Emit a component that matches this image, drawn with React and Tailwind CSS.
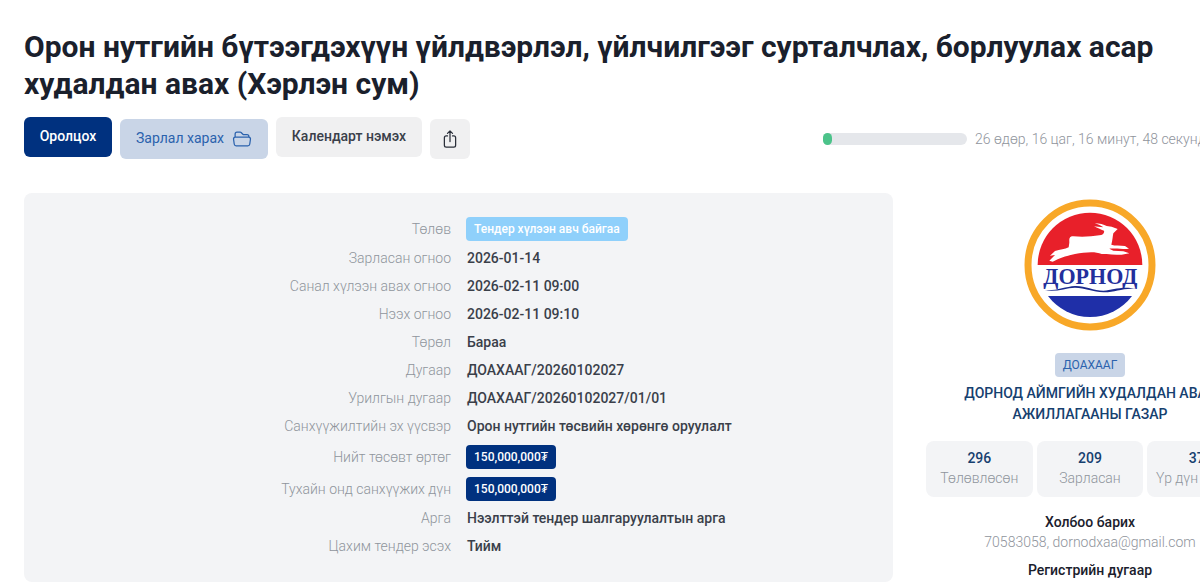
import React from 'react';
import { HiOutlineFolderOpen, HiOutlineArrowUpOnSquare } from 'react-icons/hi2';

const rows = [
  { label: 'Төлөв', status: 'Тендер хүлээн авч байгаа' },
  { label: 'Зарласан огноо', value: '2026-01-14' },
  { label: 'Санал хүлээн авах огноо', value: '2026-02-11 09:00' },
  { label: 'Нээх огноо', value: '2026-02-11 09:10' },
  { label: 'Төрөл', value: 'Бараа' },
  { label: 'Дугаар', value: 'ДОАХААГ/20260102027' },
  { label: 'Урилгын дугаар', value: 'ДОАХААГ/20260102027/01/01' },
  { label: 'Санхүүжилтийн эх үүсвэр', value: 'Орон нутгийн төсвийн хөрөнгө оруулалт' },
  { label: 'Нийт төсөвт өртөг', money: '150,000,000₮' },
  { label: 'Тухайн онд санхүүжих дүн', money: '150,000,000₮' },
  { label: 'Арга', value: 'Нээлттэй тендер шалгаруулалтын арга' },
  { label: 'Цахим тендер эсэх', value: 'Тийм' },
];

const stats = [
  { count: 296, label: 'Төлөвлөсөн' },
  { count: 209, label: 'Зарласан' },
  { count: 372, label: 'Үр дүн гарсан' },
];

const DornodLogo = () => (
  <svg viewBox="0 0 480 450" className="w-[160px] h-[150px]">
    <circle cx="240" cy="225" r="186" fill="#fff" stroke="#f8a828" strokeWidth="21" />
    <path d="M83 225 A157 157 0 0 1 397 225 Z" fill="#e8202a" />
    <path d="M114 318 L366 318 A157 157 0 0 1 114 318 Z" fill="#1f2fa8" />
    <path
      d="M323 117 L305 110 L290 108 C282 104 268 100 254 100 C268 104 274 108 280 112 C270 110 258 110 252 108 C262 114 272 118 282 122 C284 130 278 134 268 136 C245 140 215 142 190 139 C176 138 178 150 178 158 L176 172 C165 178 150 178 135 183 L120 197 L135 195 L118 212 L128 215 C145 207 165 198 195 192 C225 187 255 184 275 192 C295 194 315 194 335 194 L358 190 L340 184 L310 182 L298 176 C312 175 335 178 357 176 L345 168 C330 165 315 168 304 164 C308 150 308 138 310 130 Z"
      fill="#fff"
    />
    <text
      x="100"
      y="283"
      textLength="282"
      lengthAdjust="spacingAndGlyphs"
      fontFamily="'Liberation Serif', serif"
      fontWeight="700"
      fontSize="72"
      fill="#232f9c"
    >
      ДОРНОД
    </text>
    <path
      d="M104 300 C135 304 165 290 195 288 C225 287 250 302 280 302 C310 301 335 287 378 297 C340 292 315 308 280 307 C250 306 225 293 195 293 C165 294 135 308 104 300 Z"
      fill="#1b2a8c"
    />
  </svg>
);

const App = () => {
  return (
    <div className="w-full h-[585px] overflow-hidden bg-white font-['Roboto',sans-serif]">
      <div className="w-[1280px] px-6 pt-[28px]">
        <h1 className="text-[30px] leading-[37px] font-bold text-[#1a202c] w-[1150px]">
          Орон нутгийн бүтээгдэхүүн үйлдвэрлэл, үйлчилгээг сурталчлах, борлуулах асар худалдан авах (Хэрлэн сум)
        </h1>

        {/* Action row */}
        <div className="mt-[15px] flex items-start justify-between">
          <div className="flex items-start gap-2">
            <button className="h-10 w-[88px] pb-0.5 rounded-md bg-[#00317f] text-sm font-medium text-white">
              Оролцох
            </button>
            <button className="mt-0.5 h-10 w-[148px] rounded-md bg-[#c9d5e7] text-sm text-[#2b62ad] flex items-center justify-center gap-2">
              <span className="pb-0.5">Зарлал харах</span>
              <HiOutlineFolderOpen size={20} />
            </button>
            <button className="h-10 w-[146px] pb-0.5 rounded-md bg-[#f0f0f1] text-sm font-medium text-[#3a3f4a]">
              Календарт нэмэх
            </button>
            <button className="mt-0.5 h-10 w-10 rounded-md bg-[#f0f0f1] text-[#2a2f3a] flex items-center justify-center">
              <HiOutlineArrowUpOnSquare size={20} />
            </button>
          </div>
          <div className="mt-4 w-[433px] flex items-center gap-2">
            <div className="h-3 w-[144px] shrink-0 rounded-full bg-[#e5e7eb]">
              <div className="h-3 w-[9px] rounded-full bg-[#4cc38a]" />
            </div>
            <span className="text-sm leading-3 font-light whitespace-nowrap text-[#8f949c]">
              26 өдөр, 16 цаг, 16 минут, 48 секунд
            </span>
          </div>
        </div>

        <div className="mt-[31px] flex items-start gap-8">
          {/* Info card */}
          <div className="mt-[3px] w-[869px] rounded-lg bg-[#f3f4f6] pt-6 pb-[25px] flex flex-col gap-2">
            {rows.map((row) => (
              <div
                key={row.label}
                className={row.value
                  ? 'h-5 flex items-start gap-[15px] text-sm leading-[18px]'
                  : 'h-6 flex items-center gap-[15px] text-sm leading-[19px]'}
              >
                <div className="w-[427px] text-right font-light text-[#8f949c]">{row.label}</div>
                {row.status && (
                  <span className="h-6 flex items-center rounded bg-[#8fd0fb] px-2 text-xs font-medium text-white">
                    {row.status}
                  </span>
                )}
                {row.money && (
                  <span className="h-6 flex items-center rounded bg-[#00317f] px-2 text-xs font-medium text-white">
                    {row.money}
                  </span>
                )}
                {row.value && <div className="pl-px font-medium text-[#3a3f4a]">{row.value}</div>}
              </div>
            ))}
          </div>

          {/* Organisation */}
          <div className="w-[330px] shrink-0 flex flex-col items-center text-center">
            <DornodLogo />
            <span className="mt-[13px] h-6 flex items-center rounded bg-[#c9d5e7] px-2 text-xs text-[#2b62ad]">
              ДОАХААГ
            </span>
            <div className="mt-[6px] w-[290px] text-sm leading-[21px] font-medium text-[#16406f]">
              ДОРНОД АЙМГИЙН ХУДАЛДАН АВАХ АЖИЛЛАГААНЫ ГАЗАР
            </div>
            <div className="mt-4 w-[328px] grid grid-cols-3 gap-1">
              {stats.map((s) => (
                <div key={s.label} className="h-14 pb-0.5 rounded-lg bg-[#f3f4f6] flex flex-col items-center justify-center">
                  <div className="text-sm leading-5 font-medium text-[#16406f]">{s.count}</div>
                  <div className="text-sm leading-5 font-light whitespace-nowrap text-[#8f949c]">{s.label}</div>
                </div>
              ))}
            </div>
            <div className="mt-[15px] text-sm leading-5 font-medium text-[#1a202c]">Холбоо барих</div>
            <div className="text-sm leading-5 font-light text-[#8f949c]">70583058, dornodxaa@gmail.com</div>
            <div className="mt-2 text-sm leading-5 font-medium text-[#1a202c]">Регистрийн дугаар</div>
          </div>
        </div>
      </div>
    </div>
  );
};

export default App;
